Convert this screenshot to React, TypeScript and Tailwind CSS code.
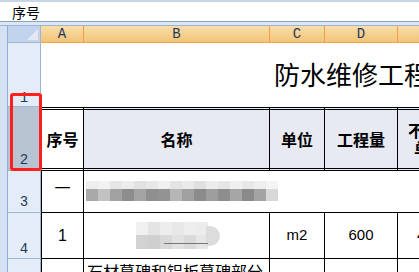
import React from 'react';

const cjk = { fontFamily: '"Noto Sans CJK SC", "Liberation Sans", sans-serif' };

const row3Top = ['#eeeeee', '#f2f2f2', '#e6e6e6', '#ececec', '#e2e2e2', '#e8e8e8', '#f0f0f0', '#e4e4e4', '#eaeaea', '#e0e0e0', '#ececec', '#e6e6e6', '#f0f0f0', '#e8e8e8', '#eeeeee', '#f4f4f4'];
const row3Bottom = ['#a9a9a9', '#c2c2c2', '#a2a2a2', '#8d8d8d', '#a4a4a4', '#8f8f8f', '#939393', '#b6b6b6', '#a0a0a0', '#8b8b8b', '#9e9e9e', '#8e8e8e', '#a6a6a6', '#8a8a8a', '#a3a3a3', '#d8d8d8'];
const row4Top = ['#f0f0f0', '#e4e4e4', '#ededed', '#e8e8e8', '#eeeeee', '#ececec'];
const row4Bottom = ['#d2d2d2', '#cfcfcf', '#d8d8d8', '#e2e2e2', '#dadada', '#e6e6e6'];

function Mosaic({ top, bottom, topH, bottomH }: { top: string[]; bottom: string[]; topH: string; bottomH: string }) {
    return (
        <div className="flex flex-col">
            <div className="flex">
                {top.map((c, i) => (
                    <div key={i} className={`w-[12px] ${topH}`} style={{ background: c }} />
                ))}
            </div>
            <div className="flex">
                {bottom.map((c, i) => (
                    <div key={i} className={`w-[12px] ${bottomH}`} style={{ background: c }} />
                ))}
            </div>
        </div>
    );
}

const colHead = 'flex items-center justify-center border-r border-[#f29d4c] bg-gradient-to-b from-[#f9deaa] to-[#f3c476] text-[14px] text-[#1e395b]';
const rowHead = 'flex items-end justify-center border-b border-r border-[#9eb6ce] text-[14px] leading-[16px] text-[#1e395b]';
const hdr = 'flex items-center justify-center border-y-[3px] border-double border-black border-r bg-[#e7e9f3] text-[16px] font-bold';

export default function App() {
    return (
        <div className="relative flex h-[272px] w-[419px] flex-col overflow-hidden bg-white" style={{ fontFamily: '"Liberation Mono", monospace' }}>
            {/* formula bar */}
            <div className="h-[2px] shrink-0 bg-[#c9d6e8]" />
            <div className="flex h-[19px] shrink-0 items-center bg-white pl-[12px] text-[14px] leading-none text-black" style={cjk}>
                序号
            </div>
            <div className="h-[1px] shrink-0 bg-[#8aa2c4]" />
            <div className="h-[3px] shrink-0 bg-[#dde7f4]" />
            <div className="h-[1px] shrink-0 bg-[#9db5d6]" />

            <div className="grid shrink-0 grid-cols-[8px_33px_43px_186px_55px_73px_68px] grid-rows-[17px_64px_64px_42px_46px_40px]">
                <div className="row-span-6 border-r border-[#8fadd6] bg-[#d3e1f3]" />

                {/* column headers */}
                <div className="relative border-r border-b border-[#9eb6ce] bg-[#c2d4ed]">
                    <svg className="absolute right-[2px] bottom-[2px]" width="11" height="11" viewBox="0 0 11 11">
                        <polygon points="11,0 11,11 0,11" fill="#e3e8f0" />
                    </svg>
                </div>
                <div className={`${colHead} border-b border-b-[#f0a444]`}>A</div>
                <div className={`${colHead} border-b border-b-[#f0a444]`}>B</div>
                <div className={`${colHead} border-b border-b-[#f0a444]`}>C</div>
                <div className={`${colHead} border-b border-b-[#f0a444]`}>D</div>
                <div className={`${colHead} border-b border-b-[#f0a444]`}>E</div>

                {/* row 1 */}
                <div className={`${rowHead} bg-[#e4ecf7]`}>1</div>
                <div className="col-span-5 flex items-center pl-[233px] pb-[2px] text-[26px] leading-none whitespace-nowrap text-black" style={cjk}>
                    防水维修工程量清单
                </div>

                {/* row 2 */}
                <div className={`${rowHead} bg-[#b9c4d2] pb-[2px]`}>2</div>
                <div className={`${hdr} border-l bg-white`} style={cjk}>序号</div>
                <div className={hdr} style={cjk}>名称</div>
                <div className={hdr} style={cjk}>单位</div>
                <div className={hdr} style={cjk}>工程量</div>
                <div className={`${hdr} flex-col items-start pl-[10px] leading-[18px]`} style={cjk}>
                    <span>不含税</span>
                    <span className="pl-[6px]">单价</span>
                </div>

                {/* row 3 */}
                <div className={`${rowHead} bg-[#e4ecf7] pb-[2px]`}>3</div>
                <div className="flex items-center justify-center border-x border-b border-black pb-[10px] text-[16px]" style={cjk}>一</div>
                <div className="col-span-4 border-b border-black pt-[10px] pl-[2px]">
                    <Mosaic top={row3Top} bottom={row3Bottom} topH="h-[8px]" bottomH="h-[12px]" />
                </div>

                {/* row 4 */}
                <div className={`${rowHead} bg-[#e4ecf7] pb-[1px]`}>4</div>
                <div className="flex items-center justify-center border-x border-b border-black text-[16px] text-black" style={{ fontFamily: '"Liberation Sans", sans-serif' }}>1</div>
                <div className="relative border-r border-b border-black pt-[9px] pl-[52px]">
                    <div className="flex items-center">
                        <Mosaic top={row4Top} bottom={row4Bottom} topH="h-[13px]" bottomH="h-[14px]" />
                        <div className="-ml-[2px] h-[20px] w-[14px] rounded-r-full bg-[#dcdcdc]" />
                    </div>
                    <div className="absolute top-[30px] left-[80px] h-[1px] w-[44px] bg-[#777]" />
                </div>
                <div className="flex items-center justify-center border-r border-b border-black text-[15px]" style={{ fontFamily: '"Liberation Sans", sans-serif' }}>m2</div>
                <div className="flex items-center justify-center border-r border-b border-black text-[15px]" style={{ fontFamily: '"Liberation Sans", sans-serif' }}>600</div>
                <div className="flex items-center border-b border-black pl-[19px] text-[15px]" style={{ fontFamily: '"Liberation Sans", sans-serif' }}>45.00</div>

                {/* row 5 */}
                <div className={`${rowHead} bg-[#e4ecf7]`}>5</div>
                <div className="border-x border-black" />
                <div className="border-r border-black pt-[4px] pl-[3px] text-[16px] leading-none whitespace-nowrap" style={cjk}>石材墓碑和铝板墓碑部分</div>
                <div className="border-r border-black" />
                <div className="border-r border-black" />
                <div />
            </div>

            {/* selection highlight drawn over the row headers */}
            <div className="absolute top-[93px] left-[10px] h-[78px] w-[32px] rounded-[3px] border-[3px] border-[#ff1f1f]" />
        </div>
    );
}
